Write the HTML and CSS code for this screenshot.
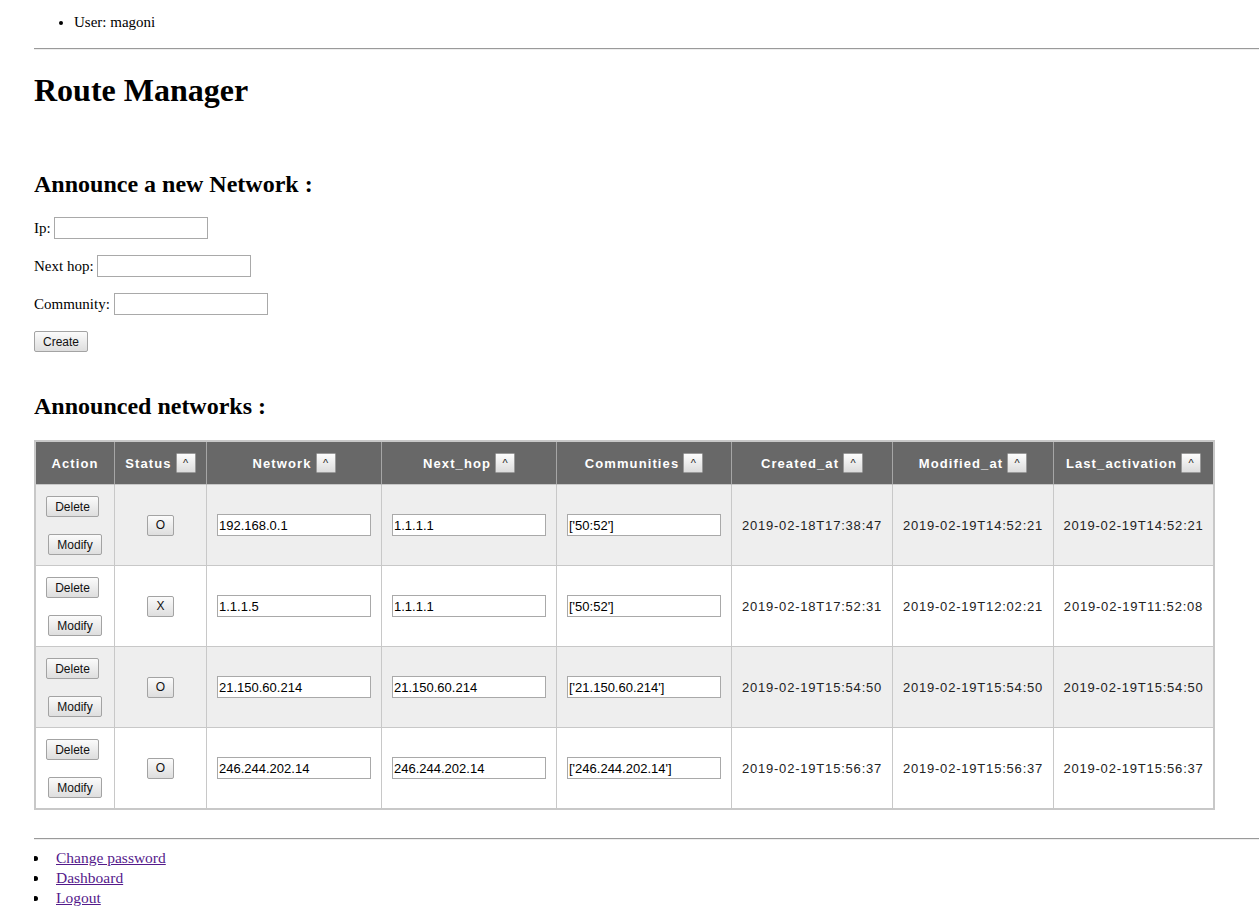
FILE: index.html
```html
<!DOCTYPE html>
<html>
<head>
<meta charset="utf-8">
<title>Route Manager</title>
<link rel="stylesheet" href="styles.css">
</head>
<body>
<ul class="userbar">
  <li>User: magoni</li>
</ul>
<hr class="rule top-rule">
<h1 class="title">Route Manager</h1>

<h2 class="section announce-title">Announce a new Network :</h2>
<form class="announce-form">
  <p class="field">Ip: <input class="text-input" type="text"></p>
  <p class="field">Next hop: <input class="text-input" type="text"></p>
  <p class="field">Community: <input class="text-input" type="text"></p>
  <p class="field"><button class="btn" type="button">Create</button></p>
</form>

<h2 class="section list-title">Announced networks :</h2>
<table class="routes">
  <thead>
    <tr>
      <th class="c-action"><div class="th-in">Action</div></th>
      <th class="c-status"><div class="th-in">Status <button class="sort" type="button">^</button></div></th>
      <th class="c-wide"><div class="th-in">Network <button class="sort" type="button">^</button></div></th>
      <th class="c-wide"><div class="th-in">Next_hop <button class="sort" type="button">^</button></div></th>
      <th class="c-wide"><div class="th-in">Communities <button class="sort" type="button">^</button></div></th>
      <th class="c-date"><div class="th-in">Created_at <button class="sort" type="button">^</button></div></th>
      <th class="c-date"><div class="th-in">Modified_at <button class="sort" type="button">^</button></div></th>
      <th class="c-last"><div class="th-in">Last_activation <button class="sort" type="button">^</button></div></th>
    </tr>
  </thead>
  <tbody>
    <tr class="odd">
      <td class="action"><div class="act"><button class="btn del" type="button">Delete</button><button class="btn" type="button">Modify</button></div></td>
      <td class="status"><button class="btn" type="button">O</button></td>
      <td class="inp"><input class="cell-input" type="text" value="192.168.0.1"></td>
      <td class="inp"><input class="cell-input" type="text" value="1.1.1.1"></td>
      <td class="inp"><input class="cell-input" type="text" value="['50:52']"></td>
      <td class="date">2019-02-18T17:38:47</td>
      <td class="date">2019-02-19T14:52:21</td>
      <td class="date">2019-02-19T14:52:21</td>
    </tr>
    <tr>
      <td class="action"><div class="act"><button class="btn del" type="button">Delete</button><button class="btn" type="button">Modify</button></div></td>
      <td class="status"><button class="btn" type="button">X</button></td>
      <td class="inp"><input class="cell-input" type="text" value="1.1.1.5"></td>
      <td class="inp"><input class="cell-input" type="text" value="1.1.1.1"></td>
      <td class="inp"><input class="cell-input" type="text" value="['50:52']"></td>
      <td class="date">2019-02-18T17:52:31</td>
      <td class="date">2019-02-19T12:02:21</td>
      <td class="date">2019-02-19T11:52:08</td>
    </tr>
    <tr class="odd">
      <td class="action"><div class="act"><button class="btn del" type="button">Delete</button><button class="btn" type="button">Modify</button></div></td>
      <td class="status"><button class="btn" type="button">O</button></td>
      <td class="inp"><input class="cell-input" type="text" value="21.150.60.214"></td>
      <td class="inp"><input class="cell-input" type="text" value="21.150.60.214"></td>
      <td class="inp"><input class="cell-input" type="text" value="['21.150.60.214']"></td>
      <td class="date">2019-02-19T15:54:50</td>
      <td class="date">2019-02-19T15:54:50</td>
      <td class="date">2019-02-19T15:54:50</td>
    </tr>
    <tr class="last">
      <td class="action"><div class="act"><button class="btn del" type="button">Delete</button><button class="btn" type="button">Modify</button></div></td>
      <td class="status"><button class="btn" type="button">O</button></td>
      <td class="inp"><input class="cell-input" type="text" value="246.244.202.14"></td>
      <td class="inp"><input class="cell-input" type="text" value="246.244.202.14"></td>
      <td class="inp"><input class="cell-input" type="text" value="['246.244.202.14']"></td>
      <td class="date">2019-02-19T15:56:37</td>
      <td class="date">2019-02-19T15:56:37</td>
      <td class="date">2019-02-19T15:56:37</td>
    </tr>
  </tbody>
</table>

<hr class="rule bottom-rule">
<ul class="links">
  <li><a href="#" class="link">Change password</a></li>
  <li><a href="#" class="link">Dashboard</a></li>
  <li><a href="#" class="link">Logout</a></li>
</ul>
</body>
</html>
```

FILE: styles.css
```css
html, body {
  background: #fff;
}
body {
  margin: 0 0 0 34px;
  font-family: "Liberation Serif", "Times New Roman", serif;
  font-size: 16px;
  color: #000;
}

.userbar {
  margin: 13px 0 17px;
  padding-left: 40px;
  font-size: 15px;
  line-height: 18px;
}

.rule {
  border: 0;
  border-top: 1px solid #9a9a9a;
  border-bottom: 1px solid #eeeeee;
  height: 0;
  margin: 0;
}

.title {
  font-size: 32px;
  font-weight: bold;
  margin: 22px 0 21px;
}

.section {
  font-size: 24px;
  font-weight: bold;
  margin: 0 0 19px;
}
.announce-title {
  margin-top: 62px;
}
.list-title {
  margin-top: 40px;
  margin-bottom: 20px;
}

.announce-form {
  margin: 0;
}
.field {
  margin: 16px 0;
  height: 22px;
  line-height: 22px;
  font-size: 15px;
}
.text-input {
  box-sizing: border-box;
  width: 154px;
  height: 22px;
  border: 1px solid #a9a9a9;
  padding: 1px 2px;
  font-family: "Liberation Sans", Arial, sans-serif;
  font-size: 13px;
  vertical-align: top;
  margin: 0;
}

.btn {
  box-sizing: border-box;
  height: 21px;
  padding: 0 8px;
  font-family: "Liberation Sans", Arial, sans-serif;
  font-size: 12px;
  letter-spacing: normal;
  color: #111;
  background: linear-gradient(#fbfbfb, #dedede);
  border: 1px solid #a3a3a3;
  border-radius: 2px;
  margin: 0;
  vertical-align: top;
}

/* table */
.routes {
  box-sizing: border-box;
  width: 1181px;
  table-layout: fixed;
  border-collapse: separate;
  border-spacing: 0;
  border: 2px solid #c8c8c8;
  font-family: "Liberation Sans", Arial, sans-serif;
  font-size: 13px;
  color: #222;
}
.routes th, .routes td {
  box-sizing: border-box;
  border-right: 1px solid #c8c8c8;
  border-bottom: 1px solid #c8c8c8;
  padding: 0;
}
.routes th:last-child, .routes td:last-child {
  border-right: 0;
}
.routes tr.last td {
  border-bottom: 0;
}
.c-action { width: 79px; }
.c-status { width: 92px; }
.c-wide { width: 175px; }
.c-date { width: 161px; }
.c-last { width: 159px; }

.routes th {
  background: #686868;
  color: #fff;
  font-weight: bold;
  letter-spacing: 1.1px;
  padding: 11px 2px;
  border-right-color: #a6a6a6;
  border-bottom-color: #c8c8c8;
}
.th-in {
  display: flex;
  justify-content: center;
  align-items: center;
  gap: 4px;
  height: 20px;
}
.sort {
  box-sizing: border-box;
  width: 20px;
  height: 20px;
  padding: 0;
  font-family: "Liberation Sans", Arial, sans-serif;
  font-size: 11px;
  font-weight: normal;
  letter-spacing: 0;
  color: #222;
  background: linear-gradient(#fdfdfd, #dcdcdc);
  border: 1px solid #9a9a9a;
  border-radius: 1px;
}

.routes tbody tr { background: #fff; }
.routes tbody tr.odd { background: #eeeeee; }
.routes td {
  vertical-align: middle;
}
.action {
  padding: 11px 0 10px !important;
}
.act {
  display: flex;
  flex-direction: column;
  align-items: center;
  gap: 17px;
}
.del {
  margin-right: 5px;
}
.status {
  text-align: center;
}
.inp {
  padding: 0 10px !important;
}
.cell-input {
  box-sizing: border-box;
  display: block;
  width: 154px;
  height: 22px;
  border: 1px solid #a9a9a9;
  padding: 1px 1px;
  font-family: "Liberation Sans", Arial, sans-serif;
  font-size: 13px;
  color: #000;
  background: #fff;
  margin: 0;
}
.date {
  text-align: center;
  letter-spacing: 0.8px;
}

.bottom-rule {
  margin-top: 28px;
}
.links {
  margin: 8px 0 0;
  padding-left: 15px;
  font-size: 15.5px;
}
.links li {
  line-height: 20px;
  padding-left: 7px;
}
.link {
  color: #551a8b;
}
```
